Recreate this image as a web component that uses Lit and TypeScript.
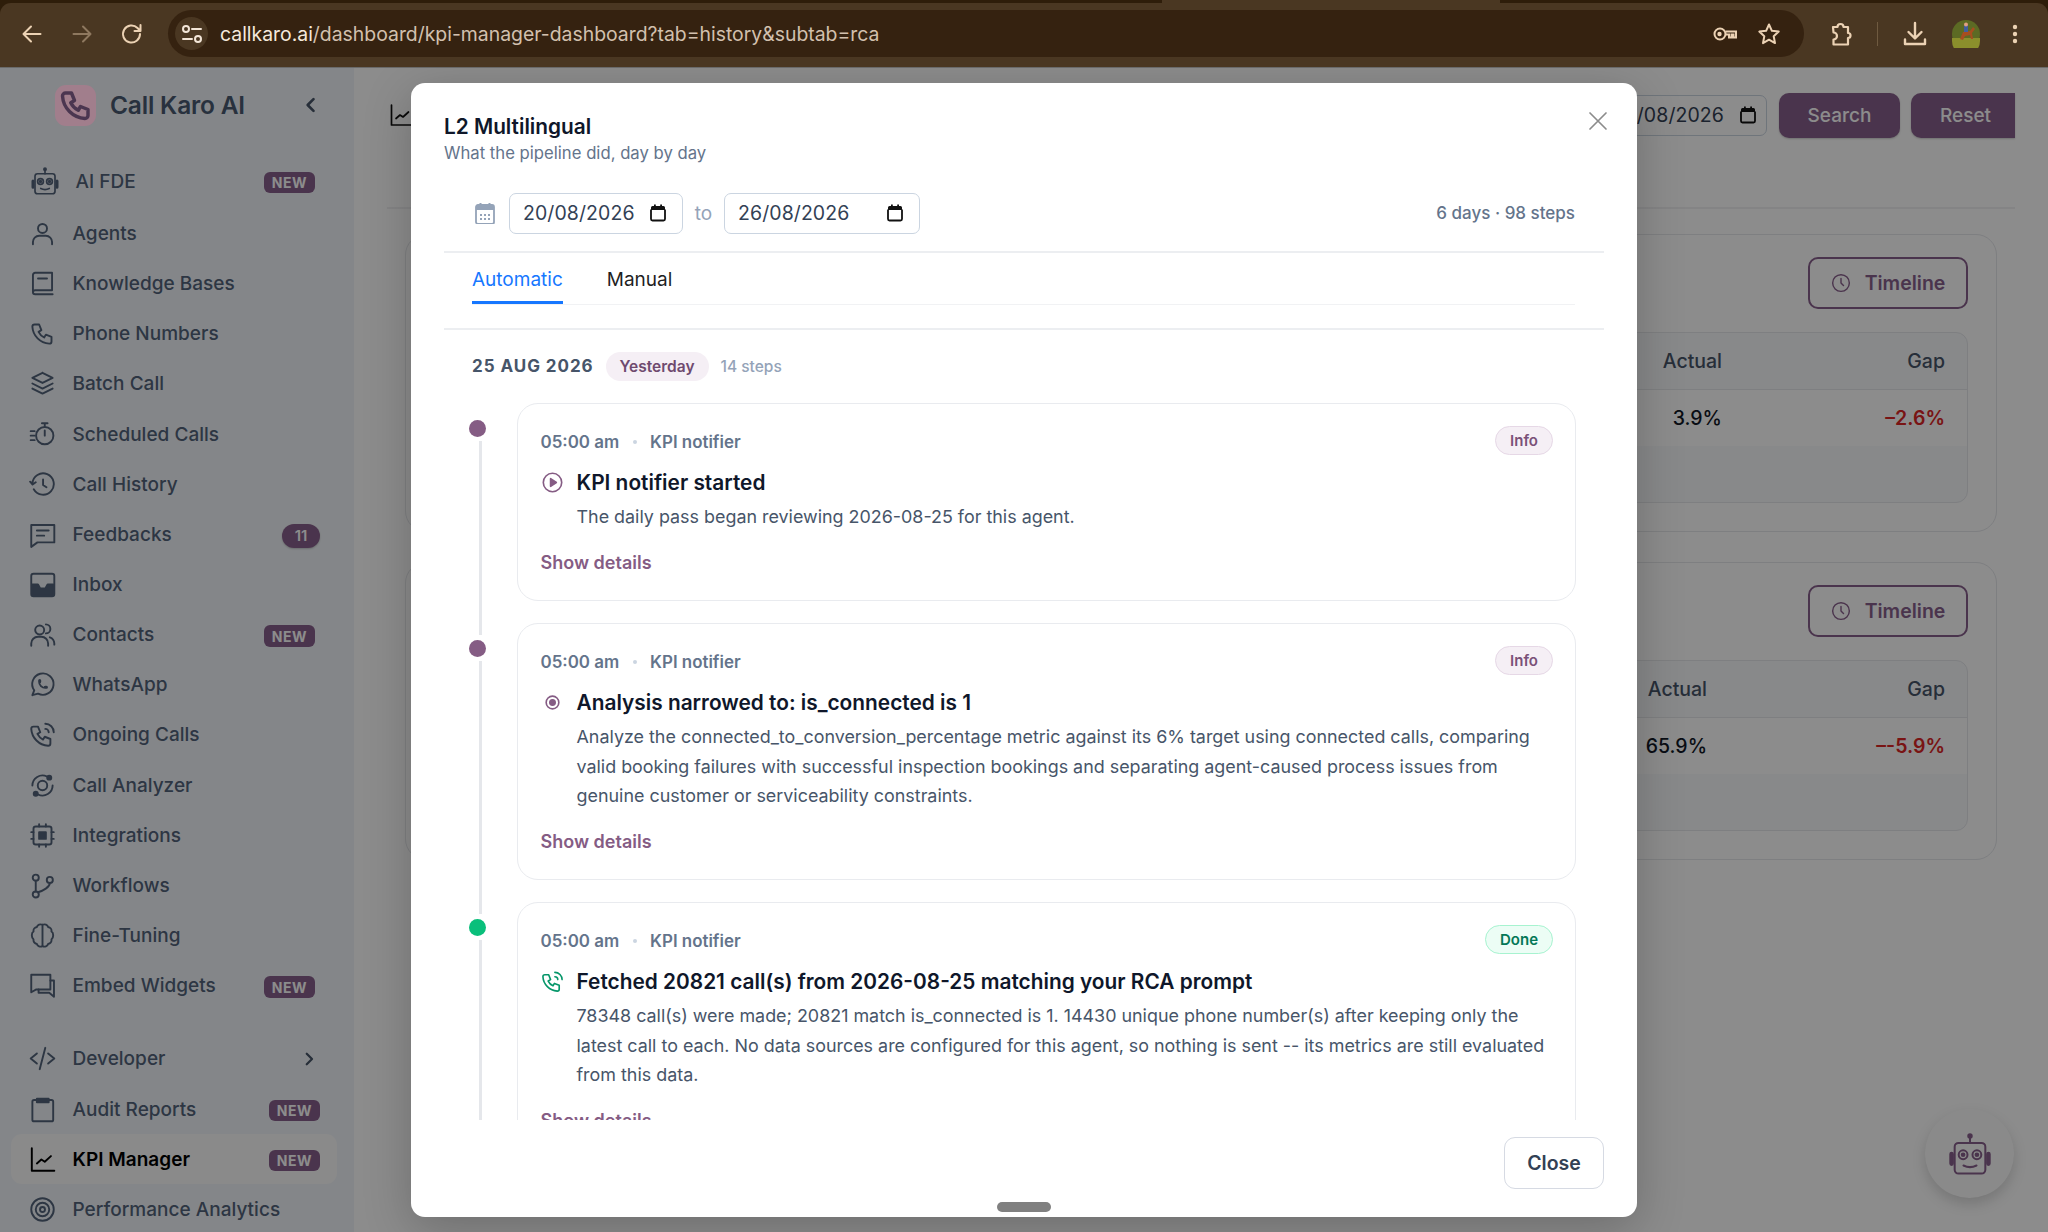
import { LitElement, html, css, svg } from "lit";
import { customElement } from "lit/decorators.js";

const ic = (c: unknown, cls = "ic") => html`<svg class=${cls} viewBox="0 0 24 24" fill="none" stroke="currentColor" stroke-width="1.7" stroke-linecap="round" stroke-linejoin="round">${c}</svg>`;
const PHONE = "M5 4h4l2 5l-2.5 1.5a11 11 0 0 0 5 5l1.5 -2.5l5 2v4a2 2 0 0 1 -2 2a16 16 0 0 1 -15 -15a2 2 0 0 1 2 -2";
const robot = svg`<path d="M12 3.2v3"/><circle cx="12" cy="2.6" r=".9" fill="currentColor"/><rect x="4" y="6.2" width="16" height="16" rx="2"/><path d="M2.4 12v5M21.6 12v5" stroke-width="2.4"/><circle cx="8.4" cy="12.4" r="2.3"/><circle cx="15.6" cy="12.4" r="2.3"/><circle cx="8.4" cy="12.4" r=".7" fill="currentColor"/><circle cx="15.6" cy="12.4" r=".7" fill="currentColor"/><path d="M8.6 18c2 1 4.8 1 6.8 0"/>`;

const ICONS: Record<string, unknown> = {
  robot,
  user: svg`<circle cx="12" cy="7.5" r="4"/><path d="M3.5 21.5v-2a5.5 5.5 0 0 1 5.5-5.5h6a5.5 5.5 0 0 1 5.5 5.5v2"/>`,
  book: svg`<path d="M20.5 2.5H5.5a2 2 0 0 0-2 2v15a2 2 0 0 0 2 2h15.5M20.5 2.5v15.5H5.5a2 2 0 0 0-2 1.8"/><path d="M8 7.5h8"/>`,
  phone: svg`<path d=${PHONE}/>`,
  stack: svg`<path d="M12 2.5l-9 4.5l9 4.5l9-4.5l-9-4.5M3 12l9 4.5l9-4.5M3 16.5l9 4.5l9-4.5"/>`,
  timer: svg`<circle cx="14" cy="13" r="7.7"/><path d="M14 8.5v4.5M14 2v2.5M11.5 2h5M1.5 9h3.5M1.5 13h3.5M1.5 17h3.5"/>`,
  history: svg`<path d="M12.5 7.5v5l3 2M3.05 11a9.5 9.5 0 1 1 1.2 5.2M1 9.5l2.2 2.5l2.8-2"/>`,
  msg: svg`<path d="M2 3.5h20.5v15.5H7.5L2 23z"/><path d="M7 8.5h10.5M7 13h6.5"/>`,
  inbox: svg`<rect x="2" y="2.5" width="20.5" height="20" rx="2"/><path d="M3 12h5l2 3.5h4.5l2-3.5h5v9.5H3z" fill="currentColor"/>`,
  users: svg`<circle cx="9.5" cy="8" r="4"/><path d="M2 22v-2a6 6 0 0 1 6-6h3a6 6 0 0 1 6 6v2M15 3a4 4 0 0 1 0 8M18.5 14.5a6 6 0 0 1 4 5.5v1"/>`,
  whatsapp: svg`<path d="M3 21.5l1.65-4.3a9.5 9.5 0 1 1 3.4 2.9l-5.05 1.4"/><path d="M9 9.5a.5.5 0 0 0 1 0v-1a.5.5 0 0 0-1 0v1a5.5 5.5 0 0 0 5.5 5.5h1a.5.5 0 0 0 0-1h-1a.5.5 0 0 0 0 1" />`,
  call: svg`<path d=${PHONE} transform="translate(-1 1)"/><path d="M14.5 7a3 3 0 0 1 3 3M14.5 2.5a7.5 7.5 0 0 1 7.5 7.5"/>`,
  analyzer: svg`<circle cx="12" cy="12" r="4.2"/><path d="M3 12a9 9 0 0 1 13-8M21 12a9 9 0 0 1-13 8"/><circle cx="18" cy="5" r="1.8" fill="currentColor"/><circle cx="6" cy="19.3" r="1.8" fill="currentColor"/>`,
  cpu: svg`<rect x="4" y="4" width="16" height="16" rx="2"/><rect x="9" y="9" width="6" height="6" fill="currentColor"/><path d="M2 9h2M2 15h2M20 9h2M20 15h2M9 2v2M15 2v2M9 20v2M15 20v2"/>`,
  branch: svg`<circle cx="6" cy="5" r="2.7"/><circle cx="6" cy="20" r="2.7"/><circle cx="18.5" cy="7" r="2.7"/><path d="M6 7.7v9.6M18.5 9.7c0 3.8-6 7-10.5 8.3"/>`,
  brain: svg`<path d="M12 2.5v19M12 2.5c-2-1-4.500 0-5 2c-2 .3-3.300 2-3 4c-2 1.300-2 5 0 7c-.3 2 1 3.700 3 4c.5 2 3 3 5 2c2 1 4.500 0 5-2c2-.3 3.300-2 3-4c2-2 2-5.700 0-7c.3-2-1-3.700-3-4c-.5-2-3-3-5-2z"/>`,
  messages: svg`<path d="M2 2.5h17v13H6.5L2 18z"/><path d="M19 7.500h3.200V22L18 18.500H8.500v-3"/>`,
  code: svg`<path d="M7 7.500l-5.500 4.500l5.500 4.500M17 7.500l5.500 4.500l-5.500 4.500M14.500 2.500l-5 19"/>`,
  clip: svg`<rect x="3" y="3.500" width="18.500" height="19" rx="1.500"/><path d="M7 2.500h10.500v3H7z" fill="currentColor"/>`,
  chart: svg`<path d="M2.500 2v20h20M7 15.500l4-3.500l3 2l5.500-5"/>`,
  target: svg`<circle cx="12" cy="12" r="10"/><circle cx="12" cy="12" r="6"/><circle cx="12" cy="12" r="2.200"/>`,
};

type Item = { label: string; icon: string; badge?: string; cls?: string };
const NAV: Item[] = [
  { label: "AI FDE", icon: "robot", badge: "NEW", cls: "fde near" },
  { label: "Agents", icon: "user" },
  { label: "Knowledge Bases", icon: "book" },
  { label: "Phone Numbers", icon: "phone" },
  { label: "Batch Call", icon: "stack" },
  { label: "Scheduled Calls", icon: "timer" },
  { label: "Call History", icon: "history" },
  { label: "Feedbacks", icon: "msg", badge: "11" },
  { label: "Inbox", icon: "inbox" },
  { label: "Contacts", icon: "users", badge: "NEW", cls: "near" },
  { label: "WhatsApp", icon: "whatsapp" },
  { label: "Ongoing Calls", icon: "call" },
  { label: "Call Analyzer", icon: "analyzer" },
  { label: "Integrations", icon: "cpu" },
  { label: "Workflows", icon: "branch" },
  { label: "Fine-Tuning", icon: "brain" },
  { label: "Embed Widgets", icon: "messages", badge: "NEW", cls: "near" },
  { label: "Developer", icon: "code", badge: ">", cls: "dev" },
  { label: "Audit Reports", icon: "clip", badge: "NEW" },
  { label: "KPI Manager", icon: "chart", badge: "NEW", cls: "active" },
  { label: "Performance Analytics", icon: "target" },
];

type Step = { dot: string; badge: string; title: string; lines: string[]; icon: unknown };
const STEPS: Step[] = [
  { dot: "purple", badge: "Info", title: "KPI notifier started", icon: svg`<circle cx="12" cy="12" r="9.600"/><path d="M10 8v8l6-4z" fill="currentColor"/>`,
    lines: ["The daily pass began reviewing 2026-08-25 for this agent."] },
  { dot: "purple", badge: "Info", title: "Analysis narrowed to: is_connected is 1", icon: svg`<circle cx="12" cy="12" r="6.600"/><circle cx="12" cy="12" r="2.800" fill="currentColor"/>`,
    lines: ["Analyze the connected_to_conversion_percentage metric against its 6% target using connected calls, comparing", "valid booking failures with successful inspection bookings and separating agent-caused process issues from", "genuine customer or serviceability constraints."] },
  { dot: "green", badge: "Done", title: "Fetched 20821 call(s) from 2026-08-25 matching your RCA prompt", icon: svg`<path d=${PHONE} transform="translate(-1 1)"/><path d="M14.500 7a3 3 0 0 1 3 3M14.500 2.500a7.500 7.500 0 0 1 7.500 7.500"/>`,
    lines: ["78348 call(s) were made; 20821 match is_connected is 1. 14430 unique phone number(s) after keeping only the", "latest call to each. No data sources are configured for this agent, so nothing is sent -- its metrics are still evaluated", "from this data."] },
];

const calIcon = html`<svg class="cal" viewBox="0 0 16 18"><path d="M1 5.500V15a1.500 1.500 0 0 0 1.500 1.500h11A1.500 1.500 0 0 0 15 15V5.500" fill="none" stroke="#111" stroke-width="1.800"/><path d="M1 3.500A1.500 1.500 0 0 1 2.500 2H4V.5h1.800V2h4.400V.5H12V2h1.500A1.500 1.500 0 0 1 15 3.500V6H1z" fill="#111"/></svg>`;

@customElement("app-root")
export class AppRoot extends LitElement {
  static styles = css`
    :host { display: block; width: 2048px; height: 1232px; overflow: hidden; font-family: Inter, "Liberation Sans", sans-serif; background: #fff; }
    .chrome { height: 68px; background: #2e1d0a; display: flex; flex-direction: column; }
    .strip { height: 3px; display: flex; }
    .strip .gap { margin-left: 1162px; width: 338px; background: #4a3722; }
    .bar { flex: 1; background: #4a3722; border-radius: 11px 11px 0 0; display: flex; align-items: center; padding: 0 0 3px 0; box-sizing: border-box; color: #ecd2b4; border-bottom: 1px solid #6a6a6a; }
    .bar svg { flex: none; display: block; }
    .nav-ic { width: 24px; height: 24px; }
    .back { margin-left: 20px; }
    .fwd { margin-left: 26px; opacity: .42; }
    .reload { margin-left: 26px; }
    .pill { margin-left: 24px; width: 1636px; height: 47px; border-radius: 24px; background: #352210; display: flex; align-items: center; }
    .site { width: 33px; height: 33px; border-radius: 50%; background: #4a3722; margin-left: 7px; display: flex; align-items: center; justify-content: center; color: #f3e6d8; }
    .url { margin-left: 12px; font-size: 19.4px; color: #d2c0ae; white-space: nowrap; flex: 1; }
    .url b { font-weight: 400; color: #f5e9dc; }
    .key { margin-right: 19px; width: 26px; height: 24px; color: #ecd2b4; }
    .star { margin-right: 23px; width: 24px; height: 24px; }
    .ext { margin-left: 25px; width: 24px; height: 26px; }
    .sep { margin-left: 24px; width: 1px; height: 24px; background: #6f5a40; }
    .dl { margin-left: 25px; width: 24px; height: 26px; }
    .avatar { margin-left: 25px; width: 28px; height: 28px; }
    .dots { margin-left: 32px; width: 6px; height: 20px; }

    .page { position: relative; height: 1164px; display: flex; overflow: hidden; background: #fff; }
    .overlay { position: absolute; inset: 0; background: rgba(0, 0, 0, .45); z-index: 5; }

    .side { width: 354px; flex: none; background: #f1f5f9; box-sizing: border-box; color: #53637b; }
    .brand { height: 86px; display: flex; align-items: center; padding: 0 0 12px 55px; box-sizing: border-box; }
    .logo { position: relative; z-index: 6; width: 41px; height: 41px; border-radius: 11px; background: #a17e8c; color: #4b3650; display: flex; align-items: center; justify-content: center; }
    .logo svg { width: 36px; height: 36px; }
    .name { margin-left: 14px; font-size: 24.5px; font-weight: 600; color: #4a5a72; letter-spacing: -.2px; flex: 1; }
    .collapse { width: 20px; height: 20px; margin-right: 33px; color: #475569; }
    .nav { display: flex; flex-direction: column; margin: 0 17px 0 11px; }
    .item { height: 50.17px; display: flex; align-items: center; padding: 0 17px 0 19px; border-radius: 11px; font-size: 19px; font-weight: 500; flex: none; }
    .ic { width: 27px; height: 27px; flex: none; margin-left: -1.5px; }
    .item .label { margin-left: 17px; flex: 1; white-space: nowrap; letter-spacing: .02px; }
    .item.fde { height: 54.3px; }
    .item.fde .ic { width: 30px; height: 30px; margin-left: -.5px; stroke-width: 1.35; }
    .item.fde .label { margin-left: 16px; }
    .item.dev { margin-top: 23px; }
    .item.active { background: #fbfbfc; color: #000; font-weight: 600; }
    .tag { background: #885f8c; color: #fff; font-size: 14px; font-weight: 700; letter-spacing: .6px; height: 21.500px; width: 51px; border-radius: 6px; display: flex; align-items: center; justify-content: center; margin-top: 3px; }
    .near .tag { margin-right: 5px; }
    .tag.count { width: 38px; height: 24px; border-radius: 12px; font-size: 15px; font-weight: 600; letter-spacing: 0; box-shadow: 0 1px 2px rgba(0,0,0,.2); }
    .chev { width: 18px; height: 18px; margin-right: 2px; color: #475569; }

    .main { flex: 1; min-width: 0; box-sizing: border-box; padding: 24px 33px 0 33px; overflow: hidden; display: flex; flex-direction: column; }
    .top { height: 46px; display: flex; align-items: center; flex: none; }
    .top .chart { width: 24px; height: 24px; color: #111; margin-left: 2px; }
    .spacer { flex: 1; }
    .dinput { display: flex; align-items: center; justify-content: space-between; box-sizing: border-box; border: 1.500px solid #cbd5e1; border-radius: 7px; background: #fff; font-size: 19.500px; color: #334155; padding: 0 16px 0 13px; height: 41px; letter-spacing: .08px; }
    .dinput.bg { width: 190px; justify-content: flex-end; gap: 16px; padding-right: 10px; }
    .cal { width: 16px; height: 18px; flex: none; }
    .btn { height: 45px; background: #885f8c; color: #fff; font-size: 19px; font-weight: 500; display: flex; align-items: center; justify-content: center; border-radius: 10px; box-shadow: 0 1px 2px rgba(0,0,0,.2); }
    .search { width: 121px; margin-left: 12px; }
    .reset { width: 104px; margin-left: 11px; padding-left: 5px; box-sizing: border-box; border-radius: 10px 0 0 10px; }
    .rule { height: 2px; background: #f1f1f3; margin-top: 69px; flex: none; }
    .cards { margin: 25px 18px 0; display: flex; flex-direction: column; gap: 29.500px; }
    .bgcard { height: 298px; box-sizing: border-box; border: 1.500px solid #e5e7eb; border-radius: 21px; padding: 22px 28px 0; display: flex; flex-direction: column; align-items: flex-end; }
    .tl { width: 160px; height: 52px; box-sizing: border-box; border: 2px solid #885f8c; border-radius: 10px; display: flex; align-items: center; justify-content: center; gap: 14px; color: #885f8c; font-size: 19.500px; font-weight: 600; }
    .tl svg { width: 20px; height: 20px; flex: none; color: #885f8c; }
    .tbl { margin-top: 23px; width: 100%; height: 171px; box-sizing: border-box; border: 1.500px solid #e5e7eb; border-radius: 12px; background: #f8fafc; overflow: hidden; }
    .r { display: flex; justify-content: flex-end; align-items: center; padding-right: 22px; box-sizing: border-box; font-size: 19.500px; }
    .r.h { height: 57px; font-weight: 500; color: #475569; border-bottom: 1.500px solid #e5e7eb; }
    .r.d { height: 56px; background: #fff; color: #111827; font-weight: 500; }
    .r .gapc { text-align: right; }
    .r .neg { color: #dc2626; font-weight: 600; }
    .fab { position: absolute; z-index: 4; left: 1925px; top: 1041px; width: 89px; height: 89px; border-radius: 50%; background: #fcfcfc; box-shadow: 0 6px 14px rgba(0,0,0,.16); color: #885f8c; display: flex; align-items: center; justify-content: center; }
    .fab svg { width: 46px; height: 46px; stroke-width: 1.05; }

    .modal { position: absolute; z-index: 10; left: 411px; top: 15px; width: 1226px; height: 1134px; background: #fff; border-radius: 14px; box-shadow: 0 12px 48px rgba(0,0,0,.22); display: flex; flex-direction: column; color: #0f172a; }
    .mhead { padding: 31px 33px 0; flex: none; }
    .mtitle { font-size: 20.800px; line-height: 26px; font-weight: 600; color: #0f172a; }
    .msub { font-size: 16.700px; line-height: 22px; margin-top: 2px; color: #64748b; }
    .x { position: absolute; right: 29px; top: 28px; width: 20px; height: 20px; color: #8c8c8c; }
    .daterow { margin: 29px 62px 0 64px; height: 40px; display: flex; align-items: center; flex: none; }
    .mcal { width: 20px; height: 22px; margin-right: 14px; flex: none; }
    .d1 { width: 174px; height: 41px; }
    .d2 { width: 196px; height: 41px; }
    .to { width: 41px; text-align: center; font-size: 19px; color: #94a3b8; }
    .counts { margin-left: auto; font-size: 17px; font-weight: 500; color: #64748b; }
    .line { height: 2px; background: #eceef1; flex: none; }
    .d-line { margin: 18px 33px 0; }
    .tabs { margin: 0 62px 0 61px; height: 51px; display: flex; gap: 44px; border-bottom: 1.500px solid #f1f2f4; box-sizing: content-box; flex: none; }
    .tab { height: 51px; box-sizing: border-box; font-size: 19px; padding-top: 15px; color: #1f1f1f; border-bottom: 3px solid transparent; }
    .tab.on { color: #1677ff; border-bottom-color: #1677ff; }
    .d-line2 { margin: 22.500px 33px 0; }
    .scroll { margin: 0 33px; height: 790px; padding: 22px 28px 0; box-sizing: border-box; overflow: hidden; flex: none; }
    .dayhead { height: 29px; display: flex; align-items: center; }
    .day { font-size: 17px; font-weight: 700; letter-spacing: .95px; color: #475569; }
    .yest { margin-left: 12px; height: 29px; padding: 0 14px; border-radius: 15px; background: #f5eff5; color: #6f4a6f; font-size: 15.500px; font-weight: 600; display: flex; align-items: center; }
    .nsteps { margin-left: 12px; font-size: 15.500px; font-weight: 500; color: #94a3b8; }
    .row { position: relative; padding-left: 45px; margin-top: 22.500px; }
    .dayhead + .row { margin-top: 22.500px; }
    .rail { position: absolute; left: 7px; top: 38px; bottom: -34px; width: 3px; background: #e5e7eb; }
    .row:last-child .rail { bottom: -200px; }
    .pip { position: absolute; left: -3px; top: 16.500px; width: 17px; height: 17px; border-radius: 50%; }
    .pip.purple { background: #855c84; }
    .pip.green { background: #0abf7b; }
    .card { position: relative; box-sizing: border-box; border: 1.500px solid #e9ebef; border-radius: 21px; padding: 27.500px 24px 25.500px 22.500px; background: #fff; }
    .meta { height: 20px; display: flex; align-items: center; font-size: 16.900px; font-weight: 600; color: #64748b; }
    .sepdot { width: 4px; height: 4px; border-radius: 50%; background: #cbd5e1; margin: 0 13px 0 14px; }
    .badge { position: absolute; top: 22px; right: 22px; height: 29px; box-sizing: border-box; padding: 0 14px; border-radius: 15px; border: 1.500px solid #e6d8e6; background: #f5eff5; color: #7a5178; font-size: 15px; font-weight: 600; display: flex; align-items: center; }
    .badge.Done { border-color: #a7f3d0; background: #ecfdf5; color: #047857; }
    .stitle { margin-top: 17px; height: 28px; display: flex; align-items: center; gap: 13px; font-size: 20.850px; font-weight: 600; color: #0f172a; white-space: nowrap; }
    .sic { width: 23px; height: 23px; flex: none; color: #855c84; margin-left: 0; }
    .sic.Done { color: #059669; }
    .desc { margin: 5.500px 0 0 36px; font-size: 17.900px; line-height: 29.500px; color: #475569; white-space: nowrap; }
    .more { margin-top: 20.500px; height: 22px; line-height: 22px; font-size: 18px; font-weight: 600; color: #855c84; }
    .mfoot { flex: 1; display: flex; justify-content: flex-end; padding: 17px 33px 0; }
    .close { width: 100px; height: 52px; box-sizing: border-box; border: 1.500px solid #d6dae3; border-radius: 11px; display: flex; align-items: center; justify-content: center; font-size: 19.500px; font-weight: 600; color: #334155; background: #fff; }
    .handle { position: absolute; left: 586px; bottom: 5px; width: 54px; height: 10px; border-radius: 5px; background: #808080; }
  `;

  private navItem(i: Item) {
    const isTag = i.badge && i.badge !== ">";
    return html`<div class="item ${i.cls ?? ""}">
      ${ic(ICONS[i.icon])}
      <span class="label">${i.label}</span>
      ${i.badge === ">" ? html`<svg class="chev" viewBox="0 0 24 24" fill="none" stroke="currentColor" stroke-width="3" stroke-linecap="round" stroke-linejoin="round"><path d="M9 5l7 7l-7 7"/></svg>` : ""}
      ${isTag ? html`<span class="tag ${i.badge === "11" ? "count" : ""}">${i.badge}</span>` : ""}
    </div>`;
  }

  private bgCard(actualW: number, actual: string, gap: string) {
    return html`<div class="bgcard">
      <div class="tl">${ic(svg`<circle cx="12" cy="12" r="10"/><path d="M12 6.500V12l3 3"/>`, "")}Timeline</div>
      <div class="tbl">
        <div class="r h"><span>Actual</span><span class="gapc" style="width:${actualW}px">Gap</span></div>
        <div class="r d"><span>${actual}</span><span class="gapc neg" style="width:${actualW}px">${gap}</span></div>
      </div>
    </div>`;
  }

  private step(s: Step) {
    return html`<div class="row">
      <div class="rail"></div><div class="pip ${s.dot}"></div>
      <div class="card">
        <div class="meta">05:00 am<span class="sepdot"></span>KPI notifier</div>
        <span class="badge ${s.badge}">${s.badge}</span>
        <div class="stitle">${ic(s.icon, `sic ${s.badge}`)}${s.title}</div>
        <div class="desc">${s.lines.map((l) => html`<div>${l}</div>`)}</div>
        <div class="more">Show details</div>
      </div>
    </div>`;
  }

  render() {
    return html`
      <div class="chrome">
        <div class="strip"><div class="gap"></div></div>
        <div class="bar">
          <svg class="nav-ic back" viewBox="0 0 24 24" fill="none" stroke="currentColor" stroke-width="2" stroke-linecap="round" stroke-linejoin="round"><path d="M20.500 12H4M11 4.500L3.500 12l7.500 7.500"/></svg>
          <svg class="nav-ic fwd" viewBox="0 0 24 24" fill="none" stroke="currentColor" stroke-width="2" stroke-linecap="round" stroke-linejoin="round"><path d="M3.500 12H20M13 4.500l7.500 7.500l-7.500 7.500"/></svg>
          <svg class="nav-ic reload" viewBox="0 0 24 24" fill="none" stroke="currentColor" stroke-width="2" stroke-linecap="round" stroke-linejoin="round"><path d="M20 12a8.500 8.500 0 1 1-2.500-6L20 8.500M20.500 3v6h-6"/></svg>
          <div class="pill">
            <div class="site"><svg width="22" height="20" viewBox="0 0 22 20" fill="none" stroke="currentColor" stroke-width="2" stroke-linecap="round"><circle cx="5" cy="5" r="3"/><path d="M11 5h9M2 15h9"/><circle cx="17" cy="15" r="3"/></svg></div>
            <div class="url"><b>callkaro.ai</b>/dashboard/kpi-manager-dashboard?tab=history&amp;subtab=rca</div>
            <svg class="key" viewBox="0 0 26 24" fill="none" stroke="currentColor" stroke-width="2"><circle cx="8" cy="12" r="5.500"/><path d="M13.500 9.500H24v6h-2.500v-3h-2v3h-2.500v-3h-3.500"/><circle cx="7.500" cy="12" r="1.200" fill="currentColor"/></svg>
            <svg class="star" viewBox="0 0 24 24" fill="none" stroke="currentColor" stroke-width="2" stroke-linejoin="round"><path d="M12 2.500l2.900 6.300l6.800.8l-5 4.700l1.300 6.800l-6-3.400l-6 3.400l1.300-6.800l-5-4.700l6.800-.8z"/></svg>
          </div>
          <svg class="ext" viewBox="0 0 24 26" fill="none" stroke="currentColor" stroke-width="2.200" stroke-linejoin="round"><path d="M4 6h4.500a3 3 0 0 1 6 0H19v6a2.500 2.500 0 0 1 0 5v6.500H4.500v-5a3 3 0 0 0 0-7z" /></svg>
          <div class="sep"></div>
          <svg class="dl" viewBox="0 0 24 26" fill="none" stroke="currentColor" stroke-width="2.400" stroke-linecap="round" stroke-linejoin="round"><path d="M12 2v15M5.500 11l6.500 6.500l6.500-6.500M2 18.500V23h20v-4.500"/></svg>
          <svg class="avatar" viewBox="0 0 28 28"><circle cx="14" cy="14" r="14" fill="#5c6a24"/><path d="M0 18h28v3a14 14 0 0 1-28 0z" fill="#8b8f2c"/><path d="M8 19l3-7l7-1l3-4l2 2l-3 4l1 6h-2l-1-4l-5 1l-2 4z" fill="#a64e1f"/><path d="M12 5h4v7h-4z" fill="#3f5f9c"/><circle cx="14" cy="4.500" r="2" fill="#e0a080"/></svg>
          <svg class="dots" viewBox="0 0 6 20" fill="currentColor"><circle cx="3" cy="3" r="2.200"/><circle cx="3" cy="10" r="2.200"/><circle cx="3" cy="17" r="2.200"/></svg>
        </div>
      </div>
      <div class="page">
        <aside class="side">
          <div class="brand">
            <div class="logo"><svg viewBox="0 0 24 24" fill="none" stroke="currentColor" stroke-width="2.300" stroke-linecap="round" stroke-linejoin="round"><path d=${PHONE}/></svg></div>
            <div class="name">Call Karo AI</div>
            <svg class="collapse" viewBox="0 0 24 24" fill="none" stroke="currentColor" stroke-width="3.200" stroke-linecap="round" stroke-linejoin="round"><path d="M15 5l-7 7l7 7"/></svg>
          </div>
          <nav class="nav">${NAV.map((i) => this.navItem(i))}</nav>
        </aside>
        <main class="main">
          <div class="top">
            ${ic(ICONS.chart, "chart")}
            <div class="spacer"></div>
            <div class="dinput bg">26/08/2026 ${calIcon}</div>
            <div class="btn search">Search</div>
            <div class="btn reset">Reset</div>
          </div>
          <div class="rule"></div>
          <div class="cards">
            ${this.bgCard(223, "3.9%", "–2.6%")}
            ${this.bgCard(238, "65.9%", "–-5.9%")}
          </div>
        </main>
        <div class="fab">${ic(robot, "")}</div>
        <div class="overlay"></div>
        <section class="modal">
          <svg class="x" viewBox="0 0 20 20" fill="none" stroke="currentColor" stroke-width="1.700" stroke-linecap="round"><path d="M2 2l16 16M18 2L2 18"/></svg>
          <div class="mhead">
            <div class="mtitle">L2 Multilingual</div>
            <div class="msub">What the pipeline did, day by day</div>
          </div>
          <div class="daterow">
            <svg class="mcal" viewBox="0 0 20 22"><path d="M1 5a2 2 0 0 1 2-2h14a2 2 0 0 1 2 2v15a2 2 0 0 1-2 2H3a2 2 0 0 1-2-2z" fill="none" stroke="#94a3b8" stroke-width="1.800"/><path d="M1 4h18v4H1z" fill="#94a3b8"/><path d="M5.500 1v4M14.500 1v4" stroke="#94a3b8" stroke-width="2"/><path d="M5 12h2v2H5zM9 12h2v2H9zM13 12h2v2h-2zM5 16h2v2H5zM9 16h2v2H9zM13 16h2v2h-2z" fill="#94a3b8"/></svg>
            <div class="dinput d1">20/08/2026 ${calIcon}</div>
            <div class="to">to</div>
            <div class="dinput d2">26/08/2026 ${calIcon}</div>
            <div class="counts">6 days · 98 steps</div>
          </div>
          <div class="line d-line"></div>
          <div class="tabs"><div class="tab on">Automatic</div><div class="tab">Manual</div></div>
          <div class="line d-line2"></div>
          <div class="scroll">
            <div class="dayhead"><span class="day">25 AUG 2026</span><span class="yest">Yesterday</span><span class="nsteps">14 steps</span></div>
            ${STEPS.map((s) => this.step(s))}
          </div>
          <div class="mfoot"><div class="close">Close</div></div>
          <div class="handle"></div>
        </section>
      </div>
    `;
  }
}
